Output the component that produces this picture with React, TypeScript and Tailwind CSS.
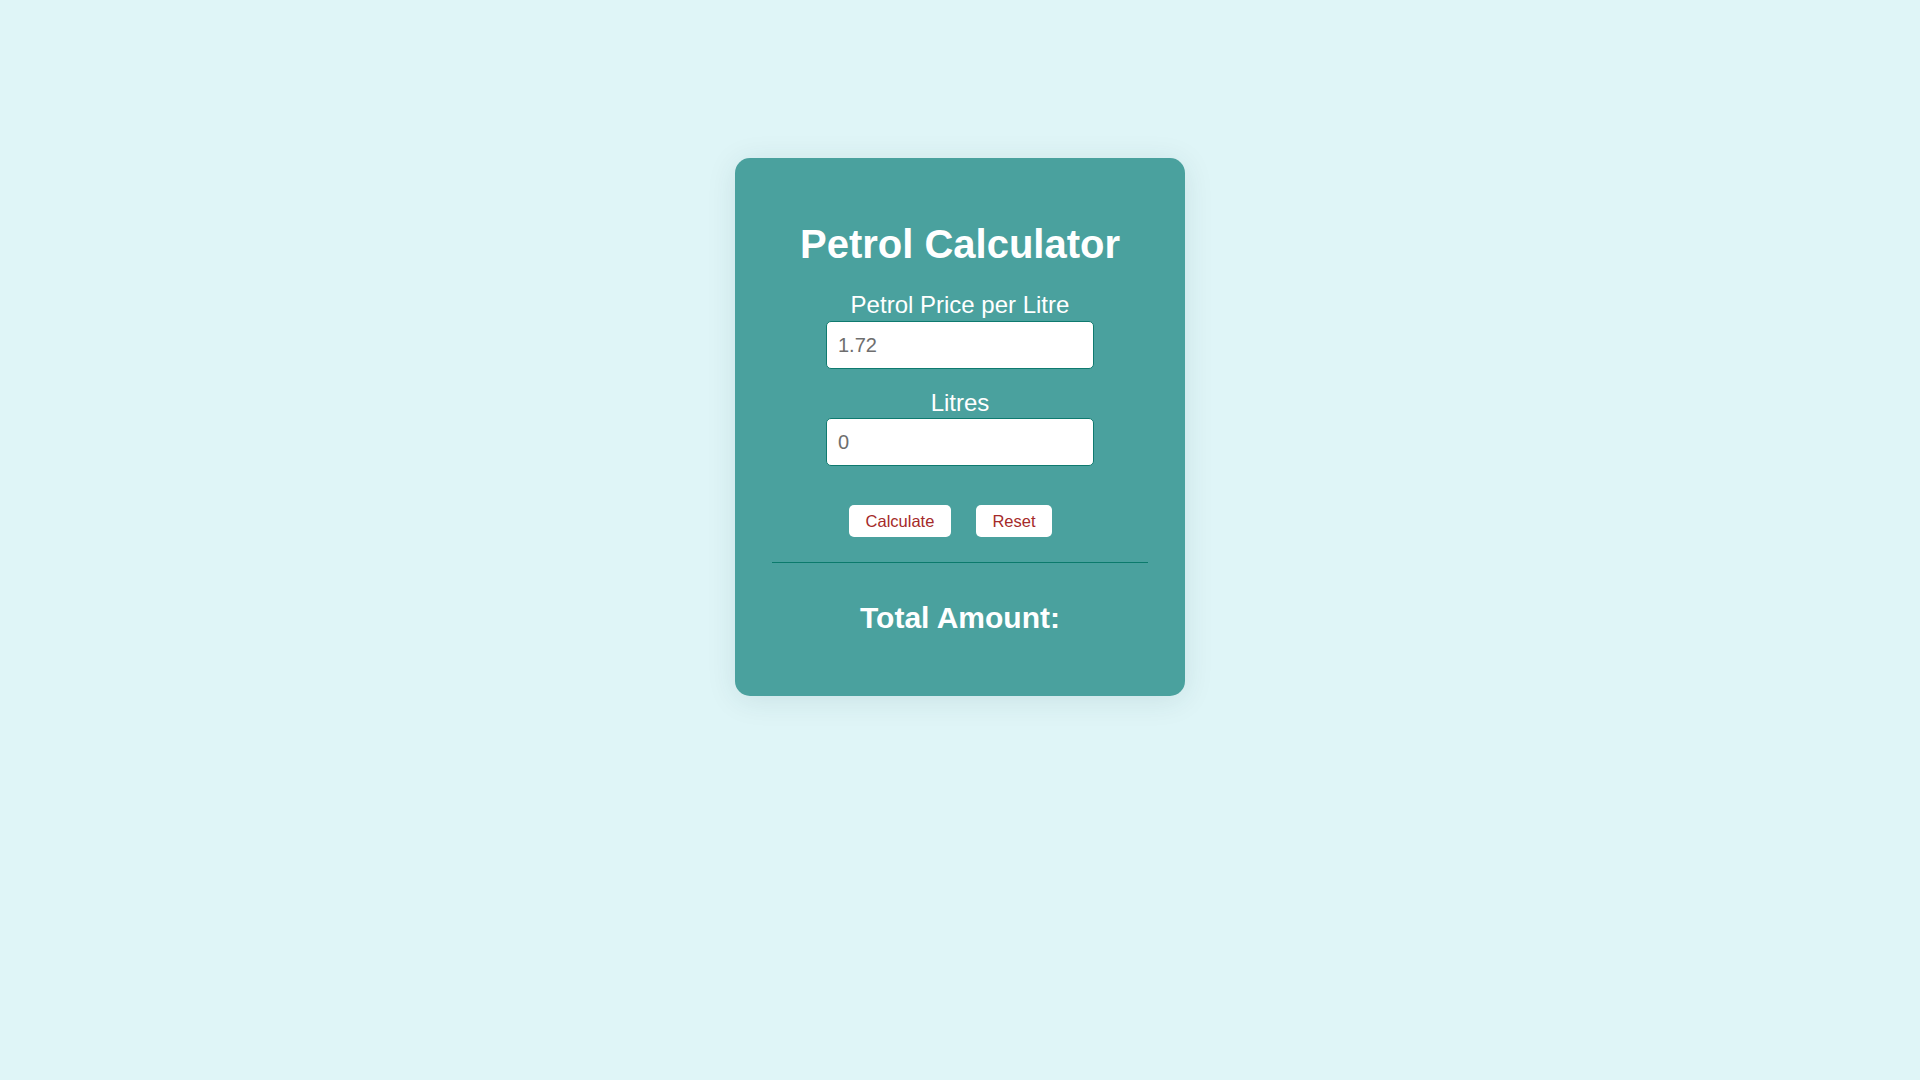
import React, { useState } from 'react';

/**
 * Petrol Calculator
 * Single card with two inputs, two buttons and a total line.
 */
export default function App() {
    const [price, setPrice] = useState('');
    const [litres, setLitres] = useState('');
    const [total, setTotal] = useState<string | null>(null);

    const calculate = () => {
        const p = parseFloat(price || '1.72');
        const l = parseFloat(litres || '0');
        setTotal((p * l).toFixed(2));
    };

    const reset = () => {
        setPrice('');
        setLitres('');
        setTotal(null);
    };

    return (
        <div
            className="min-h-screen w-full bg-[#dff5f7] flex justify-center pt-[158px]"
            style={{ fontFamily: '"Liberation Sans", Arial, sans-serif' }}
        >
            <div className="w-[450px] h-[538px] rounded-[15px] bg-[#4aa19e] shadow-[0_4px_30px_rgba(0,60,70,0.1)] flex flex-col items-center pt-[63px] px-[37px]">
                {/* Title */}
                <h1 className="text-[40px] leading-[46px] font-bold text-white">Petrol Calculator</h1>

                {/* Price */}
                <label className="mt-[24px] text-[24px] leading-[28px] text-white">Petrol Price per Litre</label>
                <input
                    type="number"
                    value={price}
                    onChange={e => setPrice(e.target.value)}
                    placeholder="1.72"
                    className="mt-[2px] w-[268px] h-[48px] rounded-[5px] border border-[#0f7a6f] bg-white pl-[11px] text-[20px] text-[#333] placeholder:text-[#6e6e6e] outline-none"
                />

                {/* Litres */}
                <label className="mt-[20px] text-[24px] leading-[28px] text-white">Litres</label>
                <input
                    type="number"
                    value={litres}
                    onChange={e => setLitres(e.target.value)}
                    placeholder="0"
                    className="mt-[1px] w-[268px] h-[48px] rounded-[5px] border border-[#0f7a6f] bg-white pl-[11px] text-[20px] text-[#333] placeholder:text-[#6e6e6e] outline-none"
                />

                {/* Buttons */}
                <div className="mt-[39px] flex gap-[25px] pr-[19px]">
                    <button
                        onClick={calculate}
                        className="h-[32px] w-[102px] rounded-[5px] bg-white text-[16.5px] text-[#a52a2a]"
                    >
                        Calculate
                    </button>
                    <button
                        onClick={reset}
                        className="h-[32px] w-[76px] rounded-[5px] bg-white text-[16.5px] text-[#a52a2a]"
                    >
                        Reset
                    </button>
                </div>

                <div className="mt-[25px] w-full h-px bg-[#0b7a6c]" />

                {/* Result */}
                <h2 className="mt-[38px] text-[30px] leading-[34px] font-bold text-white">
                    Total Amount:{total !== null ? ` ${total}` : ''}
                </h2>
            </div>
        </div>
    );
}
